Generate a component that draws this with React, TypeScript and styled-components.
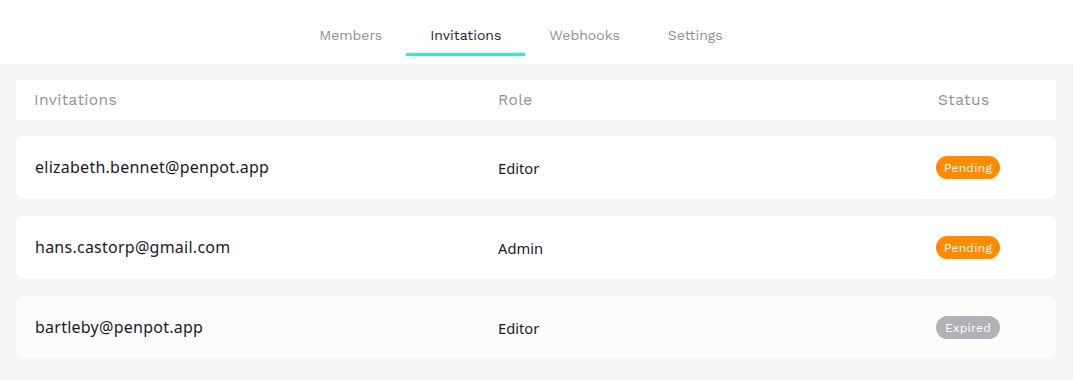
import React from "react";
import styled, { createGlobalStyle } from "styled-components";

type Status = "pending" | "expired";

interface IInvitation {
  email: string;
  role: string;
  status: Status;
}

const invitations: IInvitation[] = [
  { email: "elizabeth.bennet@penpot.app", role: "Editor", status: "pending" },
  { email: "hans.castorp@gmail.com", role: "Admin", status: "pending" },
  { email: "bartleby@penpot.app", role: "Editor", status: "expired" },
];

const tabs = ["Members", "Invitations", "Webhooks", "Settings"];

const GlobalStyle = createGlobalStyle`
  html, body {
    margin: 0;
    padding: 0;
    background: #f5f5f5;
  }
  body {
    font-family: "Work Sans", "Open Sans", "Noto Sans", sans-serif;
  }
`;

const Page = styled.div`
  width: 1073px;
  height: 380px;
  background: #f5f5f5;
`;

const TabBar = styled.nav`
  height: 64px;
  background: #ffffff;
  display: flex;
  justify-content: center;
  align-items: flex-start;
  padding-right: 31px;
  box-sizing: border-box;
`;

const Tab = styled.div<{ active?: boolean }>`
  height: 56px;
  padding: 17px 24px 0;
  box-sizing: border-box;
  display: flex;
  align-items: center;
  font-size: 14px;
  color: ${(p) => (p.active ? "#1f2236" : "#8f9098")};
  border-bottom: 3px solid ${(p) => (p.active ? "#31efb8" : "transparent")};
`;

const Table = styled.div`
  padding: 16px 17px 0 16px;
  display: flex;
  flex-direction: column;
  gap: 16px;
`;

const Header = styled.div`
  height: 40px;
  background: #ffffff;
  display: grid;
  grid-template-columns: 464px 440px 1fr;
  align-items: center;
  padding-left: 18px;
  font-size: 15.5px;
  color: #8f9098;
  letter-spacing: 0.4px;
`;

const Rows = styled.div`
  display: flex;
  flex-direction: column;
  gap: 17px;
`;

const Row = styled.div<{ faded?: boolean }>`
  height: 63px;
  border-radius: 8px;
  background: ${(p) => (p.faded ? "#fcfcfc" : "#ffffff")};
  display: grid;
  grid-template-columns: 463px 438px 1fr;
  align-items: center;
  padding-left: 19px;
`;

const Email = styled.div`
  font-family: "Noto Sans", "Open Sans", sans-serif;
  font-size: 16px;
  color: #1b1b1f;
  margin-top: -2px;
  letter-spacing: 0.25px;
`;

const Role = styled.div`
  font-family: "Noto Sans", "Open Sans", sans-serif;
  font-size: 14.7px;
  color: #1b1b1f;
`;

const Badge = styled.span<{ status: Status }>`
  display: inline-flex;
  align-items: center;
  justify-content: center;
  width: 64px;
  height: 23px;
  border-radius: 12px;
  font-size: 12px;
  font-weight: 400;
  color: #ffffff;
  background: ${(p) => (p.status === "pending" ? "#ff8b00" : "#b1b2b5")};
  letter-spacing: 0.3px;
`;

const App: React.FC = () => {
  return (
    <Page>
      <GlobalStyle />
      <TabBar>
        {tabs.map((t) => (
          <Tab key={t} active={t === "Invitations"}>
            {t}
          </Tab>
        ))}
      </TabBar>
      <Table>
        <Header>
          <span>Invitations</span>
          <span>Role</span>
          <span>Status</span>
        </Header>
        <Rows>
          {invitations.map((inv) => (
            <Row key={inv.email} faded={inv.status === "expired"}>
              <Email>{inv.email}</Email>
              <Role>{inv.role}</Role>
              <div>
                <Badge status={inv.status}>
                  {inv.status === "pending" ? "Pending" : "Expired"}
                </Badge>
              </div>
            </Row>
          ))}
        </Rows>
      </Table>
    </Page>
  );
};

export default App;
